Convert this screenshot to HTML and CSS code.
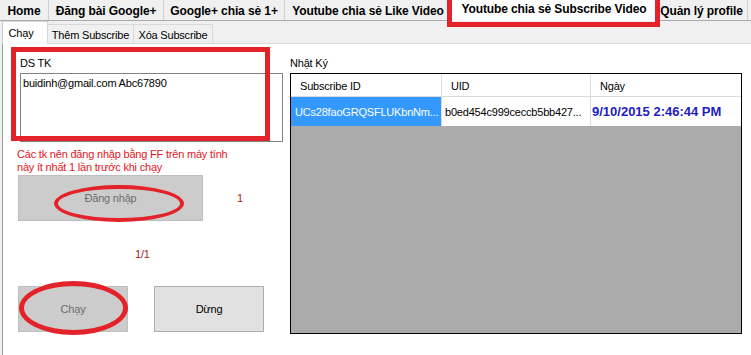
FILE: index.html
```html
<!DOCTYPE html>
<html lang="vi">
<head>
<meta charset="utf-8">
<title>Youtube chia sẻ Subscribe Video</title>
<link rel="stylesheet" href="styles.css">
</head>
<body>
<div class="app">
  <nav class="maintabs">
    <div class="mtab t-home">Home</div>
    <div class="mtab t-post">Đăng bài Google+</div>
    <div class="mtab t-plus">Google+ chia sẻ 1+</div>
    <div class="mtab t-like">Youtube chia sẻ Like Video</div>
    <div class="mtab t-sub active">Youtube chia sẻ Subscribe Video</div>
    <div class="mtab t-prof">Quản lý profile</div>
  </nav>
  <div class="page">
    <div class="subtabs">
      <div class="stab s-run active">Chạy</div>
      <div class="stab s-add">Thêm Subscribe</div>
      <div class="stab s-del">Xóa Subscribe</div>
    </div>
    <div class="panel">
      <section class="left">
        <div class="lbl">DS TK</div>
        <div class="textbox">buidinh@gmail.com Abc67890</div>
        <p class="note">Các tk nên đăng nhập bằng FF trên máy tính<br>này ít nhất 1 lần trước khi chạy</p>
        <div class="login-row">
          <button class="btn off login">Đăng nhập</button>
          <span class="count">1</span>
        </div>
        <div class="progress">1/1</div>
        <div class="run-row">
          <button class="btn off small">Chạy</button>
          <button class="btn small">Dừng</button>
        </div>
      </section>
      <section class="right">
        <div class="lbl">Nhật Ký</div>
        <div class="grid">
          <div class="grow head">
            <div class="cell c1">Subscribe ID</div>
            <div class="cell c2">UID</div>
            <div class="cell c3">Ngày</div>
          </div>
          <div class="grow data">
            <div class="cell c1 sel">UCs28faoGRQSFLUKbnNm...</div>
            <div class="cell c2">b0ed454c999ceccb5bb427...</div>
            <div class="cell c3 date">9/10/2015 2:46:44 PM</div>
          </div>
        </div>
      </section>
    </div>
  </div>
  <div class="mark mark-tab"></div>
  <div class="mark mark-box"></div>
  <div class="ring ring-login"></div>
  <div class="ring ring-run"></div>
</div>
</body>
</html>
```
FILE: styles.css
```css
* { box-sizing: border-box; }
html, body { margin: 0; padding: 0; }
body {
  background: #f0f0f0;
  font-family: "Liberation Sans", Arial, sans-serif;
  font-size: 11px;
  letter-spacing: -0.2px;
  color: #000;
}
.app {
  position: relative;
  width: 751px;
  height: 355px;
  overflow: hidden;
  background: #f0f0f0;
  display: flex;
  flex-direction: column;
}

/* main tabs */
.maintabs {
  display: flex;
  height: 21px;
  border-bottom: 1px solid #a9a9a9;
  flex: none;
}
.mtab {
  height: 20px;
  display: flex;
  align-items: center;
  justify-content: center;
  white-space: nowrap;
  overflow: hidden;
  font-size: 12px;
  font-weight: bold;
  letter-spacing: -0.1px;
  border-right: 1px solid #cfcfcf;
  padding-top: 1px;
}
.t-home { width: 49px; }
.t-post { width: 115px; }
.t-plus { width: 121px; }
.t-like { width: 167px; }
.t-sub { width: 204px; }
.t-prof { width: 92px; }
.mtab.active {
  background: #fff;
  height: 21px;
  padding-top: 0;
  padding-bottom: 4px;
  border-right: none;
}

/* sub tabs */
.page {
  flex: 1;
  display: flex;
  flex-direction: column;
  padding-left: 2px;
}
.subtabs {
  display: flex;
  align-items: flex-end;
  height: 22px;
  flex: none;
}
.stab {
  height: 19px;
  display: flex;
  align-items: center;
  justify-content: center;
  white-space: nowrap;
  border: 1px solid #d9d9d9;
  border-bottom: none;
  border-left: none;
  background: #f0f0f0;
  padding-top: 1px;
}
.s-run { width: 46px; }
.s-add { width: 86px; }
.s-del { width: 79px; }
.stab.active {
  height: 23px;
  margin-bottom: -1px;
  background: #fff;
  border-left: 1px solid #c8c8c8;
  position: relative;
  z-index: 1;
  padding-top: 0;
  padding-right: 8px;
  padding-bottom: 1px;
}

/* panel */
.panel {
  flex: 1;
  display: flex;
  background: #fff;
  border-top: 1px solid #d9d9d9;
  border-left: 1px solid #9a9a9a;
}
.lbl {
  height: 13px;
  line-height: 13px;
  white-space: nowrap;
}
.left {
  width: 287px;
  flex: none;
  padding: 13px 0 0 17px;
  display: flex;
  flex-direction: column;
}
.textbox {
  margin-top: 3px;
  width: 263px;
  height: 69px;
  border: 1px solid #828282;
  padding: 3px 2px;
  line-height: 13px;
}
.note {
  margin: 6px 0 0 -3px;
  line-height: 13px;
  color: #e2161d;
  white-space: nowrap;
}
.login-row {
  margin: 1px 0 0 -2px;
  display: flex;
  align-items: center;
}
.btn {
  font-family: "Liberation Sans", Arial, sans-serif;
  font-size: 11px;
  letter-spacing: -0.2px;
  height: 46px;
  background: #e1e1e1;
  border: 1px solid #adadad;
  color: #000;
  padding: 0;
  margin: 0;
}
.btn.off {
  background: #cccccc;
  border-color: #bfbfbf;
  color: #6d6d6d;
}
.login { width: 185px; }
.count {
  margin-left: 34px;
  color: #a8191c;
  line-height: 13px;
}
.progress {
  margin-left: 115px;
  padding-top: 27px;
  height: 65px;
  line-height: 13px;
  color: #a8191c;
}
.run-row {
  margin-left: -2px;
  display: flex;
  gap: 26px;
}
.small { width: 110px; }

/* grid */
.right {
  flex: none;
  width: 452px;
  padding-top: 13px;
  display: flex;
  flex-direction: column;
}
.grid {
  margin-top: 3px;
  width: 452px;
  height: 261px;
  border: 1px solid #000;
  background: #ababab;
}
.grow {
  display: flex;
  background: #fff;
}
.grow.head {
  height: 23px;
  border-bottom: 1px solid #dcdcdc;
}
.grow.data {
  height: 29px;
}
.cell {
  display: flex;
  align-items: center;
  white-space: nowrap;
  overflow: hidden;
  border-right: 1px solid #dcdcdc;
}
.head .cell { padding-left: 9px; padding-top: 1px; }
.data .cell { padding-left: 3px; }
.data .c1 { padding-left: 4px; }
.c1 { width: 151px; }
.c2 { width: 149px; }
.c3 { width: 150px; border-right: none; }
.cell.sel {
  background: #3399ff;
  color: #fff;
}
.cell.date {
  font-size: 13px;
  font-weight: bold;
  letter-spacing: 0;
  color: #1c1cc4;
  padding-left: 1px;
}

/* annotations */
.mark {
  position: absolute;
  border: 5px solid #e3222a;
}
.mark-tab { left: 447px; top: -5px; width: 213px; height: 32px; }
.mark-box { left: 11px; top: 47px; width: 259px; height: 94px; }
.ring {
  position: absolute;
  border: 4px solid #e3222a;
  border-radius: 50%;
}
.ring-login { left: 54px; top: 185px; width: 130px; height: 37px; }
.ring-run { left: 19px; top: 281px; width: 109px; height: 54px; border-width: 5px; }
```
